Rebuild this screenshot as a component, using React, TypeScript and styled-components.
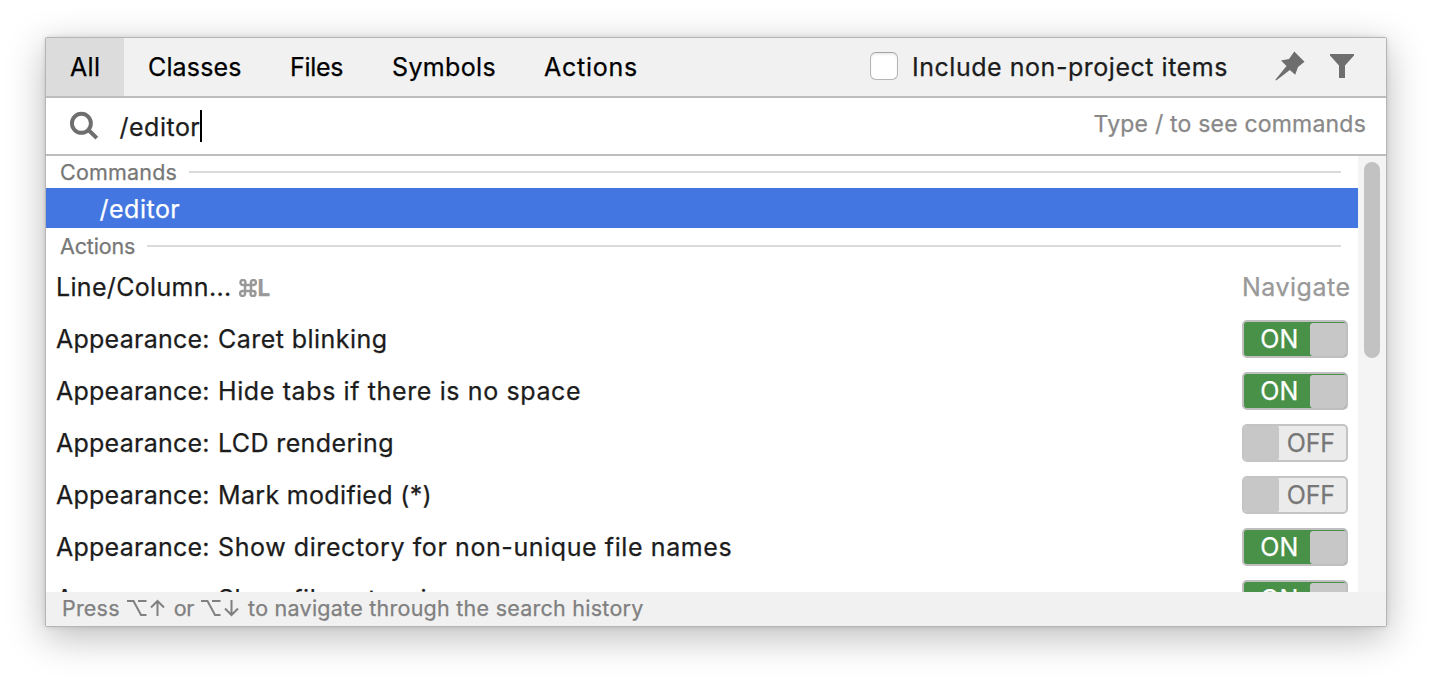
import React from 'react';
import styled, { createGlobalStyle } from 'styled-components';

const GlobalStyle = createGlobalStyle`
  * { box-sizing: border-box; }
  body {
    margin: 0;
    background: #fff;
    font-family: Inter, "Liberation Sans", sans-serif;
    overflow: hidden;
  }
`;

const Stage = styled.div`
  height: 680px;
  padding: 37px 45px 0;
`;

const Popup = styled.div`
  width: 1342px;
  height: 590px;
  display: flex;
  flex-direction: column;
  border: 1px solid #b5b5b5;
  border-radius: 2px;
  background: #fff;
  box-shadow: 0 10px 38px rgba(0, 0, 0, 0.27), 0 0 5px rgba(0, 0, 0, 0.12);
`;

const Header = styled.div`
  height: 60px;
  flex: none;
  display: flex;
  background: #f1f1f1;
  border-bottom: 2px solid #bdbdbd;
`;

const Label = styled.span<{ $spacing?: number; $size?: number }>`
  font-size: ${(p) => p.$size ?? 25}px;
  letter-spacing: ${(p) => p.$spacing ?? 0}px;
  line-height: 32px;
  white-space: pre;
  -webkit-text-stroke: 0.25px currentColor;
`;

const Tab = styled.div<{ $width: number; $active?: boolean }>`
  width: ${(p) => p.$width}px;
  height: 58px;
  padding: 13px 0 0 24px;
  color: #000;
  background: ${(p) => (p.$active ? '#dcdcdc' : 'transparent')};
`;

const HeaderTools = styled.div`
  margin-left: auto;
  height: 58px;
  display: flex;
  align-items: flex-start;
`;

const CheckBox = styled.span`
  width: 28px;
  height: 28px;
  margin: 14px 14px 0 0;
  border: 1px solid #b4b4b4;
  border-top-color: #a2a2a2;
  border-radius: 6px;
  background: #fff;
  box-shadow: inset 0 2px 2px rgba(0, 0, 0, 0.07);
`;

const CheckLabel = styled.div`
  width: 363px;
  padding-top: 13px;
  color: #1c1c1c;
`;

const PinIcon = styled.svg`
  width: 32px;
  height: 32px;
  margin: 12px 19px 0 0;
  fill: #6e6e6e;
`;

const FilterIcon = styled(PinIcon)`
  margin-right: 28px;
`;

const SearchRow = styled.div`
  height: 58px;
  flex: none;
  display: flex;
  border-bottom: 2px solid #bdbdbd;
`;

const SearchIcon = styled.svg`
  width: 32px;
  height: 32px;
  margin: 12px 0 0 22px;
  fill: none;
  stroke: #6e6e6e;
`;

const Query = styled.div`
  display: flex;
  width: 82.500px;
  margin-left: 19.500px;
  padding-top: 13px;
  color: #1c1c1c;
`;

const Caret = styled.span`
  width: 2px;
  height: 32px;
  margin: -1px 0 0 auto;
  flex: none;
  background: #000;
`;

const Hint = styled.div`
  margin: 10px 20px 0 auto;
  color: #888;
`;

const Results = styled.div`
  flex: 1;
  min-height: 0;
  display: flex;
  overflow: hidden;
`;

const List = styled.div`
  width: 1312px;
  overflow: hidden;
`;

const GroupTitle = styled.div<{ $height: number }>`
  height: ${(p) => p.$height}px;
  padding: ${(p) => (p.$height - 32) * 2}px 17px 0 14px;
  display: flex;
  align-items: center;
  gap: 12px;
  color: #777;
`;

const Rule = styled.span`
  flex: 1;
  height: 2px;
  background: #dadada;
`;

const CommandRow = styled.div`
  height: 40px;
  padding: 5px 0 0 53.500px;
  color: #fff;
  background: #4376e0;
`;

const Row = styled.div`
  height: 52px;
  padding: 0 10px 0 10px;
  display: flex;
  align-items: center;
  color: #1c1c1c;
`;

const Shortcut = styled.span`
  display: flex;
  align-items: center;
  margin: 2px 0 0 7px;
  color: #999;
  font-weight: 700;
`;

const CommandKey = styled.svg`
  width: 18px;
  height: 18px;
  margin-right: 1px;
  fill: none;
  stroke: #999;
`;

const Category = styled.span`
  margin: 0 -2.500px 0 auto;
  color: #999;
`;

const Toggle = styled.div<{ $on: boolean }>`
  width: 106.500px;
  height: 38px;
  margin-left: auto;
  display: flex;
  flex-direction: ${(p) => (p.$on ? 'row' : 'row-reverse')};
  border: 2px solid ${(p) => (p.$on ? '#bfbfbf' : '#c4c4c4')};
  border-radius: 5px;
  overflow: hidden;
  color: ${(p) => (p.$on ? '#fff' : '#777')};
  background: ${(p) => (p.$on ? '#499149' : '#ebebeb')};
`;

const ToggleText = styled.div<{ $on: boolean }>`
  flex: 1;
  padding-left: ${(p) => (p.$on ? 5 : 0)}px;
  padding-right: ${(p) => (p.$on ? 0 : 3)}px;
  display: flex;
  align-items: center;
  justify-content: center;
`;

const Knob = styled.div<{ $on: boolean }>`
  width: ${(p) => (p.$on ? 36 : 35)}px;
  margin-top: ${(p) => (p.$on ? 1 : 0)}px;
  border-radius: ${(p) => (p.$on ? '3px 0 0 3px' : '0 2px 2px 0')};
  background: #c7c7c7;
`;

const ScrollTrack = styled.div`
  width: 28px;
  padding: 6px 6px 0;
  background: #f4f4f4;
`;

const ScrollThumb = styled.div`
  width: 16px;
  height: 196px;
  border-radius: 8px;
  background: #c2c2c2;
`;

const Footer = styled.div`
  height: 34px;
  flex: none;
  padding: 0 0 2px 16px;
  display: flex;
  align-items: center;
  color: #808080;
  background: #f1f1f1;
`;

const KeyGlyphs = styled.svg`
  width: 38px;
  height: 20px;
  margin: 0 9px 0 7px;
  flex: none;
  fill: none;
  stroke: #808080;
  stroke-width: 2;
`;

const tabs = [
  { text: 'All', width: 78, spacing: 0.3 },
  { text: 'Classes', width: 142, spacing: 0.15 },
  { text: 'Files', width: 102, spacing: -0.3 },
  { text: 'Symbols', width: 152, spacing: 0.35 },
  { text: 'Actions', width: 142, spacing: 0.75 },
];

const options = [
  { text: 'Caret blinking', on: true, spacing: 0.45 },
  { text: 'Hide tabs if there is no space', on: true, spacing: 0.62 },
  { text: 'LCD rendering', on: false, spacing: 0.38 },
  { text: 'Mark modified (*)', on: false, spacing: 0.33 },
  { text: 'Show directory for non-unique file names', on: true, spacing: 0.59 },
  { text: 'Show file extension', on: true, spacing: 0.5 },
];

const Prefix = styled.span`
  width: 162px;
  flex: none;
`;

function OptionKeys({ down }: { down?: boolean }) {
  return (
    <KeyGlyphs viewBox="0 0 38 20">
      <path d="M0 3h6.500l7.500 14H19.500M11 3h8.500" />
      <path d={down ? 'M30.500 2v14.500M24 10.500l6.500 6.500 6.500-6.500' : 'M30.500 18V3.500M24 9.500l6.500-6.500 6.500 6.500'} />
    </KeyGlyphs>
  );
}

export default function App() {
  return (
    <Stage>
      <GlobalStyle />
      <Popup>
        <Header>
          {tabs.map((t, i) => (
            <Tab key={t.text} $width={t.width} $active={i === 0}>
              <Label $spacing={t.spacing}>{t.text}</Label>
            </Tab>
          ))}
          <HeaderTools>
            <CheckBox />
            <CheckLabel><Label $spacing={0.53}>Include non-project items</Label></CheckLabel>
            <PinIcon viewBox="0 0 32 32">
              <path d="M19.300 1.500L29.500 11.700l-6.500 5.300-2.800 7.800-5.400-4.800L1.200 30.500l-.8-.8L11.500 16 6 10.500l8-1.500z" />
            </PinIcon>
            <FilterIcon viewBox="0 0 32 32">
              <path d="M4 4h24v1.500l-9 10V28h-6V15.500l-9-10z" />
            </FilterIcon>
          </HeaderTools>
        </Header>
        <SearchRow>
          <SearchIcon viewBox="0 0 32 32">
            <circle cx="13.400" cy="13.300" r="9.500" strokeWidth="3.900" />
            <path d="M20 19.500l8.800 8.600" strokeWidth="4" />
          </SearchIcon>
          <Query>
            <Label $spacing={0.5}>/editor</Label>
            <Caret />
          </Query>
          <Hint><Label $size={23} $spacing={0.2}>Type / to see commands</Label></Hint>
        </SearchRow>
        <Results>
          <List>
            <GroupTitle $height={32}>
              <Label $size={21.5} $spacing={0.2}>Commands</Label>
              <Rule />
            </GroupTitle>
            <CommandRow><Label $spacing={0.5}>/editor</Label></CommandRow>
            <GroupTitle $height={33}>
              <Label $size={21.5} $spacing={-0.15}>Actions</Label>
              <Rule />
            </GroupTitle>
            <Row>
              <Label $spacing={0.33}>Line/Column...</Label>
              <Shortcut>
                <CommandKey viewBox="0 0 18 18">
                  <path strokeWidth="2.500" d="M6 6h6v6H6zM6 6H4a2.500 2.500 0 1 1 2.500-2.500zM12 6V4a2.500 2.500 0 1 1 2.500 2zM12 12h2a2.500 2.500 0 1 1-2.500 2.500zM6 12v2a2.500 2.500 0 1 1-2.500-2z" />
                </CommandKey>
                <Label $size={22.5}>L</Label>
              </Shortcut>
              <Category><Label $spacing={0.5}>Navigate</Label></Category>
            </Row>
            {options.map((o) => (
              <Row key={o.text}>
                <Prefix><Label $spacing={0.25}>Appearance:</Label></Prefix>
                <Label $spacing={o.spacing}>{o.text}</Label>
                <Toggle $on={o.on}>
                  <ToggleText $on={o.on}>
                    <Label $spacing={o.on ? 0 : -0.2}>{o.on ? 'ON' : 'OFF'}</Label>
                  </ToggleText>
                  <Knob $on={o.on} />
                </Toggle>
              </Row>
            ))}
          </List>
          <ScrollTrack><ScrollThumb /></ScrollTrack>
        </Results>
        <Footer>
          <Label $size={21.5} $spacing={0.2}>Press</Label>
          <OptionKeys />
          <Label $size={21.5} $spacing={-0.3}>or</Label>
          <OptionKeys down />
          <Label $size={21.5} $spacing={0.25}>to navigate through the search history</Label>
        </Footer>
      </Popup>
    </Stage>
  );
}
